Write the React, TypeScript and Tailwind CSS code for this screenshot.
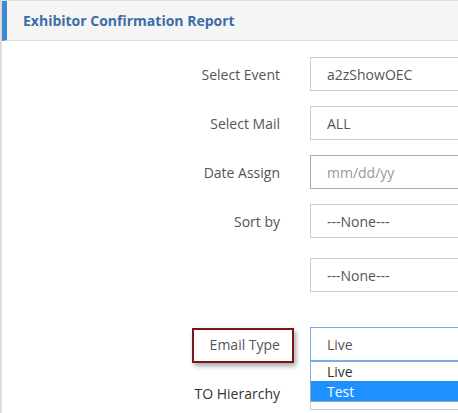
import React from "react";

const font = { fontFamily: '"Open Sans", "Liberation Sans", sans-serif' };

function Row({
	label,
	children,
	className = "",
	labelClass = "text-[#555]",
}: {
	label?: string;
	children: React.ReactNode;
	className?: string;
	labelClass?: string;
}) {
	return (
		<div className={"flex items-center " + className}>
			<div className={"w-[278px] shrink-0 text-right text-[14px] " + labelClass}>
				{label}
			</div>
			<div className="ml-[30px] w-[200px] shrink-0">{children}</div>
		</div>
	);
}

function Box({
	children,
	className = "",
}: {
	children: React.ReactNode;
	className?: string;
}) {
	return (
		<div
			className={
				"flex h-[34px] items-center border px-4 text-[14px] " + className
			}
		>
			{children}
		</div>
	);
}

export default function App() {
	return (
		<div
			className="h-[413px] w-[458px] overflow-hidden bg-white"
			style={font}
		>
			<div className="h-full border-t border-l-2 border-[#dddddd]">
				{/* Header */}
				<div className="flex h-[40px] items-center border-b border-l-[5px] border-b-[#dddddd] border-l-[#3d8ad0] bg-[#f5f5f5] pl-4">
					<h1 className="text-[14px] font-bold text-[#3b6ea5]">
						Exhibitor Confirmation Report
					</h1>
				</div>

				{/* Form */}
				<div className="flex flex-col pt-[16px]">
					<Row label="Select Event">
						<Box className="border-[#cccccc] text-[#555]">a2zShowOEC</Box>
					</Row>
					<Row label="Select Mail" className="mt-[15px]">
						<Box className="border-[#cccccc] text-[#555]">ALL</Box>
					</Row>
					<Row label="Date Assign" className="mt-[15px]">
						<Box className="border-[#a9a9a9] text-[#999]">mm/dd/yy</Box>
					</Row>
					<Row label="Sort by" className="mt-[15px]">
						<Box className="border-[#cccccc] text-[#555]">---None---</Box>
					</Row>
					<Row className="mt-[20px]">
						<Box className="border-[#cccccc] text-[#555]">---None---</Box>
					</Row>

					<div className="relative mt-[35px]">
						<Row label="Email Type">
							<Box className="border-[#7aaee0] text-[#555]">Live</Box>
						</Row>
						{/* highlight box around the label */}
						<div className="absolute left-[190px] top-[1px] h-[35px] w-[102px] border-2 border-[#7a1518] shadow-[2px_3px_5px_rgba(0,0,0,0.35)]" />

						<Row label="TO Hierarchy" className="mt-[15px]" labelClass="text-[#333]">
							<Box className="border-[#cccccc] text-[#555]">&nbsp;</Box>
						</Row>

						{/* open dropdown list */}
						<div className="absolute left-[308px] top-[34px] w-[200px] border border-t-0 border-[#8fa9c9] bg-white text-[14px]">
							<div className="flex h-[20px] items-center border-t border-[#7aaee0] px-4 text-[#333]">
								Live
							</div>
							<div className="flex h-[20px] items-center bg-[#1e90ff] px-4 text-white">
								Test
							</div>
						</div>
					</div>
				</div>
			</div>
		</div>
	);
}
